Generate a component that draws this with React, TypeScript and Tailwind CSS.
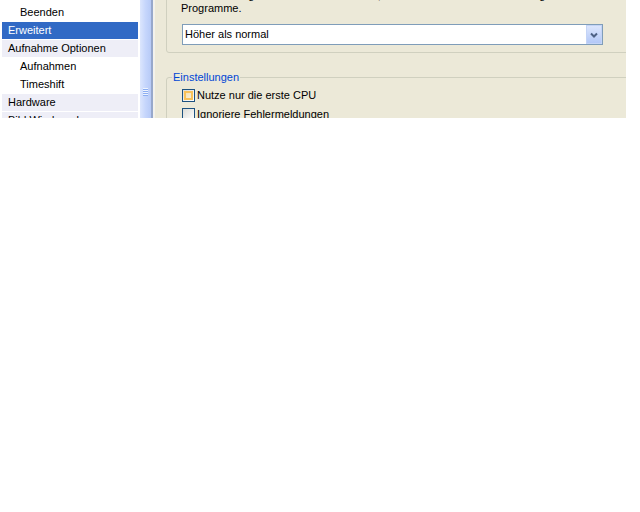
const items = [
  { label: "Beenden", sub: true, tone: "plain" },
  { label: "Erweitert", sub: false, tone: "selected" },
  { label: "Aufnahme Optionen", sub: false, tone: "group" },
  { label: "Aufnahmen", sub: true, tone: "plain" },
  { label: "Timeshift", sub: true, tone: "plain" },
  { label: "Hardware", sub: false, tone: "group" },
  { label: "Bild Wiedergabe", sub: false, tone: "group" },
];

function rowClass(tone: string, sub: boolean) {
  const pad = sub ? "pl-[18px]" : "pl-[6px]";
  if (tone === "selected") return `${pad} bg-[#316AC5] text-white`;
  if (tone === "group") return `${pad} bg-[#EEEEF7] text-black`;
  return `${pad} bg-white text-black`;
}

function Checkbox({ hover }: { hover?: boolean }) {
  return (
    <div className="w-[13px] h-[13px] shrink-0 border border-[#1C5180] bg-gradient-to-br from-[#DCDCD7] to-white p-px">
      {hover ? (
        <div className="w-full h-full border-2 border-[#F8C25A] bg-gradient-to-br from-[#F6E2B4] to-[#F4ECD8]" />
      ) : null}
    </div>
  );
}

export default function App() {
  return (
    <div className="w-[640px] h-[512px] bg-white font-['Tahoma','Liberation_Sans',sans-serif] text-[11px] text-black">
      <div className="flex w-[626px] h-[118px] overflow-hidden">
        {/* tree list */}
        <div className="w-[140px] shrink-0 bg-white pt-[4px] px-[2px] flex flex-col gap-px">
          {items.map((it) => (
            <div key={it.label} className={`h-[17px] leading-[17px] whitespace-nowrap ${rowClass(it.tone, it.sub)}`}>
              {it.label}
            </div>
          ))}
        </div>

        {/* scrollbar thumb */}
        <div className="w-[11px] shrink-0 bg-gradient-to-r from-[#DCE6FD] via-[#C6D6FC] to-[#B7CAF7] flex justify-center">
          <div className="mt-[88px] w-[5px] flex flex-col">
            {[0, 1, 2, 3].map((i) => (
              <div key={i} className="flex flex-col">
                <div className="h-px bg-[#EEF4FE]" />
                <div className="h-px bg-[#8CAEF2]" />
              </div>
            ))}
          </div>
        </div>
        <div className="w-[2px] shrink-0 bg-[#97A8CB]" />
        <div className="w-[2px] shrink-0 bg-[#F3F2EC]" />

        {/* settings panel */}
        <div className="w-[471px] shrink-0 bg-[#ECE9D8] overflow-hidden">
          <div className="ml-[11px] -mt-[28px] w-[480px] border border-[#D0D0BF] rounded-[3px] pl-[14px] pt-[15px] pb-[7px]">
            <div className="leading-[14px] whitespace-nowrap">
              Die Einstellung bestimmt die Rechenzeit, die Windows dem Dienst im Vergleich zu anderen
            </div>
            <div className="leading-[13px]">Programme.</div>
            <div className="mt-[9px] ml-px w-[421px] h-[21px] border border-[#7F9DB9] bg-white flex items-center">
              <div className="flex-1 pl-[2px] leading-[19px]">Höher als normal</div>
              <div className="w-[16px] h-[19px] bg-gradient-to-b from-[#DCE6FD] to-[#B3C8F7] border border-[#C4D4F6] flex items-center justify-center">
                <svg width="8" height="6" viewBox="0 0 8 6">
                  <path d="M1 1.5 L4 4.5 L7 1.5" fill="none" stroke="#4D6185" strokeWidth="2" />
                </svg>
              </div>
            </div>
          </div>

          <fieldset className="ml-[11px] mt-[17px] w-[480px] border border-[#D0D0BF] rounded-[3px]">
            <legend className="ml-[5px] px-px leading-[14px] text-[#0046D5]">Einstellungen</legend>
            <div className="pl-[15px] pt-[2px]">
              <div className="h-[19px] flex items-center gap-[2px]">
                <Checkbox hover />
                <span className="leading-[13px]">Nutze nur die erste CPU</span>
              </div>
              <div className="h-[19px] flex items-center gap-[2px]">
                <Checkbox />
                <span className="leading-[13px]">Ignoriere Fehlermeldungen</span>
              </div>
            </div>
          </fieldset>
        </div>
      </div>
    </div>
  );
}
